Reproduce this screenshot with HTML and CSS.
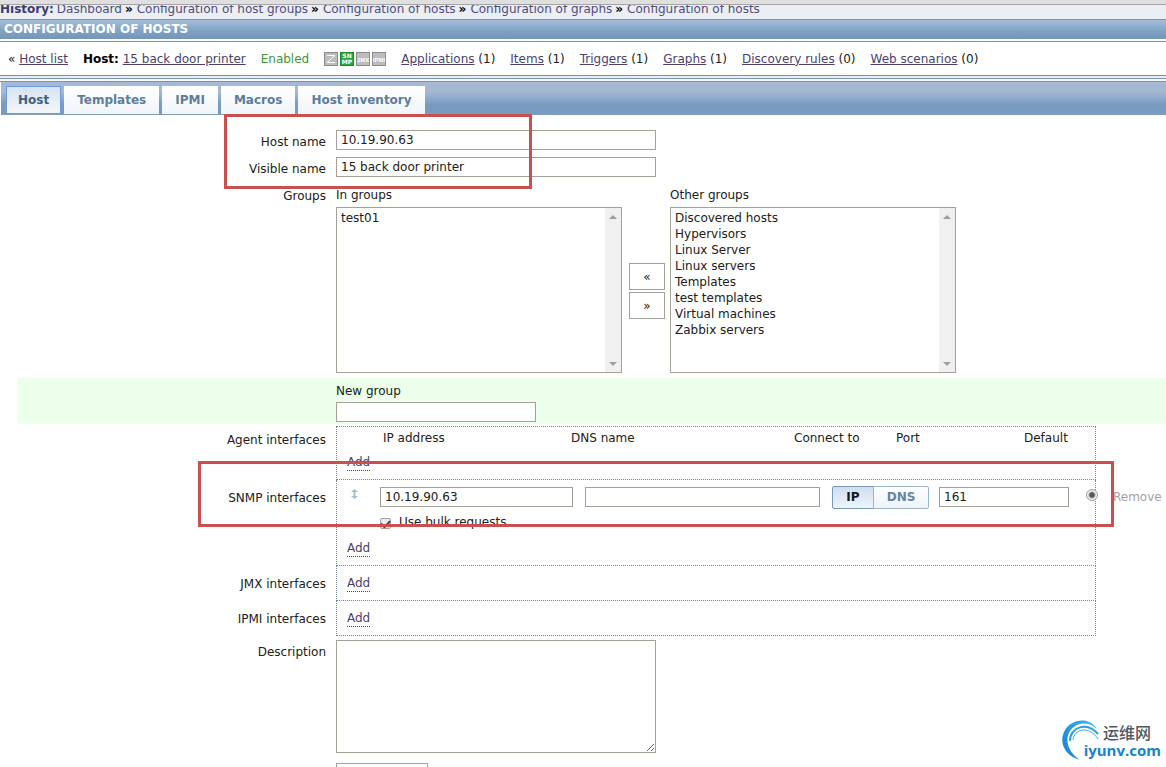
FILE: index.html
```html
<!DOCTYPE html>
<html lang="en">
<head>
<meta charset="utf-8">
<title>Configuration of hosts</title>
<link rel="stylesheet" href="styles.css">
</head>
<body>
<div class="page">
  <div class="top-strip"></div>
  <nav class="history" aria-label="History">
    <b>History:</b>
    <a href="#">Dashboard</a><span class="sep">»</span>
    <a href="#">Configuration of host groups</a><span class="sep">»</span>
    <a href="#">Configuration of hosts</a><span class="sep">»</span>
    <a href="#">Configuration of graphs</a><span class="sep">»</span>
    <a href="#">Configuration of hosts</a>
  </nav>
  <h1 class="title">CONFIGURATION OF HOSTS</h1>
  <div class="toolbar">
    <span>« <a href="#">Host list</a></span>
    <span><b>Host:</b> <a href="#">15 back door printer</a></span>
    <span class="enabled">Enabled</span>
    <span class="badges">
      <svg class="badge" viewBox="0 0 14 14"><rect x=".5" y=".5" width="13" height="13"/><path d="M3 3.500h8L3 10.500h8"/></svg>
      <svg class="badge on" viewBox="0 0 14 14"><rect x=".5" y=".5" width="13" height="13"/><text x="7" y="6">SN</text><text x="7" y="12">MP</text></svg>
      <svg class="badge" viewBox="0 0 14 14"><rect x=".5" y=".5" width="13" height="13"/><text class="tall" x="7" y="10">JMX</text></svg>
      <svg class="badge" viewBox="0 0 14 14"><rect x=".5" y=".5" width="13" height="13"/><text class="tall" x="7" y="10">IPMI</text></svg>
    </span>
    <span><a href="#">Applications</a> (1)</span>
    <span><a href="#">Items</a> (1)</span>
    <span><a href="#">Triggers</a> (1)</span>
    <span><a href="#">Graphs</a> (1)</span>
    <span><a href="#">Discovery rules</a> (0)</span>
    <span><a href="#">Web scenarios</a> (0)</span>
  </div>
  <div class="divider"></div>
  <div class="tabs" role="tablist">
    <button class="tab active" role="tab" aria-selected="true">Host</button>
    <button class="tab" role="tab">Templates</button>
    <button class="tab" role="tab">IPMI</button>
    <button class="tab" role="tab">Macros</button>
    <button class="tab" role="tab">Host inventory</button>
  </div>

  <form class="form">
    <div class="row">
      <label for="host">Host name</label>
      <input class="wide" id="host" type="text" value="10.19.90.63">
    </div>
    <div class="row">
      <label for="visible">Visible name</label>
      <input class="wide" id="visible" type="text" value="15 back door printer">
    </div>
    <div class="row">
      <span class="name">Groups</span>
      <div class="groups">
        <div class="list">
          <label for="in-groups">In groups</label>
          <select id="in-groups" multiple><option>test01</option></select>
        </div>
        <div class="movers">
          <button type="button" aria-label="Add to groups">«</button>
          <button type="button" aria-label="Remove from groups">»</button>
        </div>
        <div class="list">
          <label for="other-groups">Other groups</label>
          <select id="other-groups" multiple>
            <option>Discovered hosts</option>
            <option>Hypervisors</option>
            <option>Linux Server</option>
            <option>Linux servers</option>
            <option>Templates</option>
            <option>test templates</option>
            <option>Virtual machines</option>
            <option>Zabbix servers</option>
          </select>
        </div>
      </div>
    </div>
    <div class="row new-group">
      <label class="over" for="new-group">New group</label>
      <input class="mid" id="new-group" type="text">
    </div>
    <div class="row iface">
      <span class="name agent">Agent interfaces</span>
      <div class="box first">
        <div class="heads">
          <span>IP address</span><span>DNS name</span><span>Connect to</span><span>Port</span><span>Default</span>
        </div>
        <a class="add" href="#">Add</a>
      </div>
    </div>
    <div class="row iface snmp">
      <span class="name">SNMP interfaces</span>
      <div class="box">
        <div class="entry">
          <svg class="drag" viewBox="0 0 7 10"><path d="M3.500 0 7 3H4.500v4H7L3.500 10 0 7h2.500V3H0z"/></svg>
          <input class="ip" type="text" value="10.19.90.63" aria-label="IP address">
          <input class="dns" type="text" aria-label="DNS name">
          <span class="toggle"><button type="button" class="picked">IP</button><button type="button">DNS</button></span>
          <input class="port" type="text" value="161" aria-label="Port">
          <input class="default" type="radio" checked aria-label="Default">
          <span class="remove">Remove</span>
        </div>
        <label class="bulk"><input type="checkbox" checked>Use bulk requests</label>
        <a class="add" href="#">Add</a>
      </div>
      <div class="mark mark-snmp"></div>
    </div>
    <div class="row iface">
      <span class="name">JMX interfaces</span>
      <div class="box"><a class="add" href="#">Add</a></div>
    </div>
    <div class="row iface">
      <span class="name">IPMI interfaces</span>
      <div class="box"><a class="add" href="#">Add</a></div>
    </div>
    <div class="row description">
      <label for="description">Description</label>
      <textarea class="wide" id="description"></textarea>
    </div>
    <div class="row">
      <select class="proxy" aria-label="Monitored by proxy"></select>
    </div>
    <div class="mark mark-host"></div>
  </form>

  <div class="brand">
    <svg class="swirl" viewBox="0 0 40 42">
      <defs><linearGradient id="g" x1="0" y1="1" x2="1" y2="0"><stop offset="0" stop-color="#1a7fd0"/><stop offset="1" stop-color="#35b8ee"/></linearGradient></defs>
      <path fill="url(#g)" d="M18 40C3 36-3 23 2 12 8-1 27-4 35 9 27 1 14 2 8 11 2 21 7 33 18 40z"/>
      <path fill="none" stroke="#2a9fe0" stroke-width="2" d="M8 21C8 7 25 1 36 14"/>
      <path fill="none" stroke="#35b0ea" d="M11 20C12 9 27 5 36 19"/>
    </svg>
    <span class="brand-cn" lang="zh">运维网</span>
    <span class="brand-url">iyunv.com</span>
  </div>
</div>
</body>
</html>
```
FILE: styles.css
```css
* { box-sizing: border-box; }
body, button, input, select, textarea {
  font-family: "DejaVu Sans", Verdana, sans-serif;
  font-size: 12px;
}
body { margin: 0; background: #fff; color: #202020; line-height: 16px; }
a { color: #4b3f6b; }
b { color: #000; }

.page { position: relative; height: 100vh; overflow: hidden; }
.top-strip { height: 5px; background: #dfdfdf; border-bottom: 1px solid #a4a4a4; }
.history {
  display: flex; align-items: flex-end; height: 15px; overflow: hidden;
  background: #ebeef3; border-bottom: 1px solid #7d93ab; padding-bottom: 2px;
  white-space: nowrap;
}
.history a { text-decoration: none; color: #504c7c; }
.history b { color: #403c70; margin-right: 3px; }
.sep { color: #000; font-weight: bold; margin: 0 4px 0 3px; }
.title {
  margin: 0; height: 19px; padding: 0 4px; color: #fff;
  font-size: 12px; line-height: 18px;
  background: linear-gradient(#a5bed6, #7fa1c5 60%, #7396b6);
}
.toolbar {
  display: flex; align-items: center; gap: 15px; height: 35px; padding: 0 8px;
  border-top: 1px solid #7d93ab; border-bottom: 1px solid #7d93ab;
  margin-top: 2px; white-space: nowrap;
}
.enabled { color: #3c963c; }
.badges { display: flex; gap: 2px; }
.badge { width: 14px; height: 14px; }
.badge rect { fill: #bdbdbd; stroke: #8b8b8b; }
.badge path { fill: none; stroke: #fff; }
.badge text { fill: #fff; font: bold 6px "DejaVu Sans", sans-serif; text-anchor: middle; }
.badge .tall { font: bold 6px "Liberation Sans", sans-serif; }
.badge.on rect { fill: #2fa63a; stroke: #1c8a2a; }
.divider { height: 6px; border: solid #7d93ab; border-width: 0 0 1px; background: linear-gradient(#e9f0f5 2px, #7d93ab 2px, #7d93ab 3px, #f4f9fc 3px); }

.tabs {
  display: flex; align-items: flex-end; gap: 3px; height: 33px; padding: 0 5px;
  margin-left: 1px;
  background: linear-gradient(#a5b9d3 30%, #789bc1 70%);
  border-bottom: 1px solid #7d9dbc;
}
.tab {
  height: 28px; border: 0; padding: 0 13px; font-weight: bold; color: #5d7d9b;
  background: linear-gradient(#fff, #f0f5fa);
}
.tab.active { padding: 0 12px; color: #426080; background: linear-gradient(#d5e2f0, #f5f9fc); outline: 1px solid #6a9ae0; outline-offset: -1px; }

.form { position: relative; padding: 15px 0 0 18px; }
.row { display: grid; grid-template-columns: 308px 1fr; column-gap: 10px; margin-bottom: 7px; align-items: start; }
.row > label, .name { text-align: right; padding-top: 4px; }
input[type="text"], textarea, select {
  border: 1px solid #a3a198; border-radius: 0; background: #fff; color: #202020; margin: 0;
}
input[type="text"] { height: 20px; padding: 0 4px; }
.wide { width: 100%; max-width: 320px; }
.mid { width: 200px; }

.groups { display: flex; align-items: flex-start; }
.list { display: flex; flex-direction: column; gap: 4px; padding-top: 3px; }
.list select {
  width: 286px; height: 166px; padding: 3px 0 0; scrollbar-width: none;
  background:
    url("data:image/svg+xml,%3Csvg xmlns='http://www.w3.org/2000/svg' width='8' height='4'%3E%3Cpath fill='%23a0a0a0' d='M4 0l4 4H0z'/%3E%3C/svg%3E") right 4px top 7px no-repeat,
    url("data:image/svg+xml,%3Csvg xmlns='http://www.w3.org/2000/svg' width='8' height='4'%3E%3Cpath fill='%23a0a0a0' d='M4 4l4-4H0z'/%3E%3C/svg%3E") right 4px bottom 6px no-repeat,
    linear-gradient(#f0f0f0, #f0f0f0) right / 16px 100% no-repeat,
    #fff;
}
.list option { height: 16px; padding: 0 4px; min-height: 16px; line-height: 16px; }
.movers { display: flex; flex-direction: column; gap: 2px; padding: 79px 5px 0 7px; }
.movers button { width: 36px; height: 27px; border: 1px solid #a3a198; background: #fff; padding: 0; color: #202020; }

.new-group { background: #ebffeb; margin: -2px 0 2px; padding: 5px 0 2px; row-gap: 3px; }
.new-group > * { grid-column: 2; }
.row > .over { text-align: left; padding: 0; }

.iface { margin: 0; position: relative; }
.iface .name { padding-top: 10px; }
.iface .agent { padding-top: 6px; }
.box {
  max-width: 760px; padding: 10px 10px 8px;
  border: 1px dotted #73819a; border-top: 0;
}
.box.first { border-top: 1px dotted #73819a; padding-top: 3px; }
.heads { display: grid; grid-template-columns: 188px 223px 102px 128px 1fr; padding-left: 36px; margin-bottom: 9px; white-space: nowrap; }
.add { display: inline-block; line-height: 15px; text-decoration: none; border-bottom: 1px dotted #4b3f6b; vertical-align: top; }
.snmp .box { padding-top: 6px; }
.entry { display: flex; align-items: center; width: max-content; height: 22px; }
.drag { width: 7px; height: 10px; margin: 0 22px 6px 4px; fill: #a5bfca; }
.ip { width: 193px; }
.entry .dns { width: 235px; margin: 0 12px; }
.toggle { display: flex; margin-right: 10px; }
.toggle button {
  height: 23px; width: 56px; padding: 0; font-weight: bold; color: #6584a1;
  border: 1px solid #9bb6cf; border-radius: 0 2px 2px 0; background: linear-gradient(#fff, #edf3f9);
}
.toggle .picked { width: 42px; margin-right: -1px; color: #101820; border-color: #7899b8; border-radius: 2px 0 0 2px; background: linear-gradient(#cfdeed, #eef5fb); }
.port { width: 130px; }
.default, .bulk input {
  appearance: none; width: 12px; height: 12px; margin: 0 15px 4px 17px;
  border: 1px solid #a0a0a0; border-radius: 6px;
  background: radial-gradient(#555 2px, #eee 4px);
}
.remove { color: #a3a3a3; }
.bulk { display: flex; align-items: center; margin: 6px 0 11px 33px; }
.bulk input { width: 11px; height: 11px; margin: 2px 8px 0 0; border-radius: 2px; background: #ececec; display: grid; place-items: center; }
.bulk input::before { content: ""; width: 7px; height: 4px; border: solid #444; border-width: 0 0 2px 2px; transform: rotate(-45deg); }

.description { margin: 4px 0 10px; }
textarea { height: 113px; display: block; }
.proxy { grid-column: 2; width: 92px; height: 22px; appearance: none; }

.mark { position: absolute; border: 3px solid #c9504f; pointer-events: none; }
.mark-host { left: 224px; top: -1px; width: 308px; height: 75px; }
.mark-snmp { left: 180px; top: -19px; width: 916px; height: 66px; }

.brand { position: absolute; right: 5px; bottom: 5px; width: 99px; height: 44px; }
.swirl { position: absolute; left: 0; top: 2px; width: 40px; height: 42px; }
.brand-cn { position: absolute; left: 41px; top: 2px; font: 500 16px/24px "Noto Sans CJK SC", sans-serif; color: #505860; }
.brand-url { position: absolute; right: 0; bottom: 2px; font: bold 15px/20px "Open Sans", sans-serif; color: #1684c8; }
```
